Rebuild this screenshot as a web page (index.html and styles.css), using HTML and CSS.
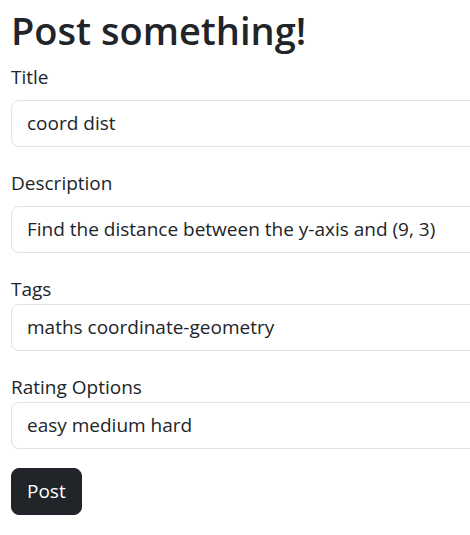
FILE: index.html
```html
<!DOCTYPE html>
<html lang="en">
<head>
<meta charset="utf-8">
<title>Post something!</title>
<link rel="stylesheet" href="styles.css">
</head>
<body>
<main class="page">
  <h1 class="title">Post something!</h1>
  <form class="post-form">
    <div class="group">
      <label class="label label-spaced" for="t">Title</label>
      <input class="field" id="t" type="text" value="coord dist">
    </div>
    <div class="group">
      <label class="label label-spaced" for="d">Description</label>
      <input class="field" id="d" type="text" value="Find the distance between the y-axis and (9, 3)">
    </div>
    <div class="group">
      <label class="label" for="g">Tags</label>
      <input class="field" id="g" type="text" value="maths coordinate-geometry">
    </div>
    <div class="group group-last">
      <label class="label" for="r">Rating Options</label>
      <input class="field" id="r" type="text" value="easy medium hard">
    </div>
    <button class="btn" type="button">Post</button>
  </form>
</main>
</body>
</html>
```
FILE: styles.css
```css
html, body {
  margin: 0;
  padding: 0;
  overflow: hidden;
  background: #fff;
}
body {
  font-family: "Open Sans", "Noto Sans", sans-serif;
  color: #212529;
  font-size: 19px;
  line-height: 1.5;
}
.page {
  padding: 0 0 0 11px;
  width: 560px;
}
.title {
  font-size: 38px;
  font-weight: 600;
  line-height: 1.2;
  margin: 8px 0 8px;
}
.post-form {
  display: flex;
  flex-direction: column;
}
.group {
  display: flex;
  flex-direction: column;
  margin-bottom: 21px;
}
.group-last {
  margin-bottom: 19px;
}
.label {
  display: block;
  line-height: 30px;
}
.label-spaced {
  margin-bottom: 8px;
}
.field {
  font: inherit;
  color: #212529;
  height: 47px;
  box-sizing: border-box;
  padding: 0 15px;
  border: 1px solid #dee2e6;
  border-radius: 8px;
  background: #fff;
  outline: none;
}
.btn {
  align-self: flex-start;
  font: inherit;
  color: #fff;
  background: #212529;
  border: 1px solid #212529;
  border-radius: 8px;
  height: 47px;
  padding: 0 15px;
  cursor: pointer;
}
```
